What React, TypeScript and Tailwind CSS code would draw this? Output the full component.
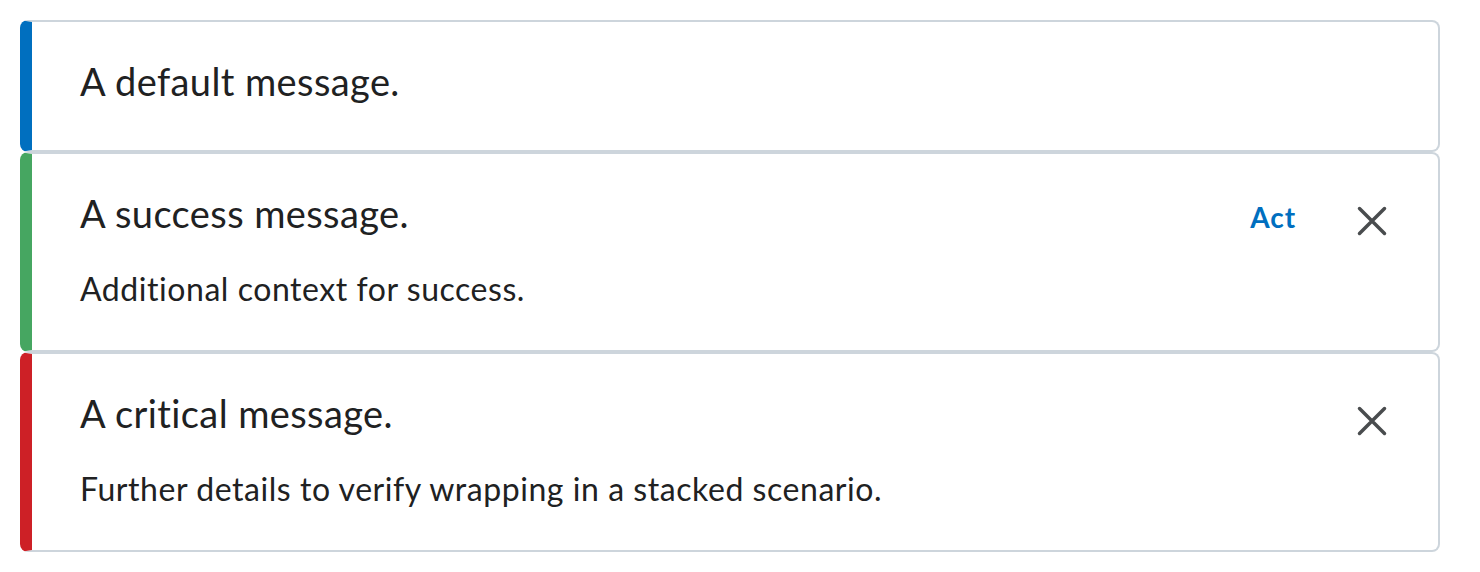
import React from 'react';

type Alert = {
  title: string;
  sub?: string;
  bar: string;
  action?: string;
  close?: boolean;
};

const alerts: Alert[] = [
  { title: 'A default message.', bar: 'border-l-[#006fbf]' },
  {
    title: 'A success message.',
    sub: 'Additional context for success.',
    bar: 'border-l-[#46a661]',
    action: 'Act',
    close: true,
  },
  {
    title: 'A critical message.',
    sub: 'Further details to verify wrapping in a stacked scenario.',
    bar: 'border-l-[#cd2026]',
    close: true,
  },
];

const CloseIcon: React.FC = () => (
  <svg width="30" height="30" viewBox="0 0 30 30" fill="none">
    <path d="M2.5 2.5 L27.5 27.5 M27.5 2.5 L2.5 27.5" stroke="#494c4e" strokeWidth="3.5" strokeLinecap="round" />
  </svg>
);

const AlertBox: React.FC<{ alert: Alert }> = ({ alert }) => (
  <div
    className={`flex items-start rounded-lg border-2 border-[#cdd5dc] border-l-[12px] ${alert.bar} bg-white pl-[48px] pr-[51px] pt-[31px] pb-[41px]`}
  >
    <div className="flex-1 text-[#202122]">
      <div className="text-[38px] leading-[56px] tracking-[0.4px]">{alert.title}</div>
      {alert.sub && (
        <div className="mt-[28px] text-[32px] leading-[40px] tracking-[0.55px]">{alert.sub}</div>
      )}
    </div>
    {alert.action && (
      <button className="mt-[12px] mr-[61px] text-[28px] leading-[40px] font-bold tracking-[0.9px] text-[#006fbf]">
        {alert.action}
      </button>
    )}
    {alert.close && (
      <button className="mt-[21px] flex">
        <CloseIcon />
      </button>
    )}
  </div>
);

export default function App() {
  return (
    <div className="p-5 bg-white font-['Lato',sans-serif]">
      <div className="flex w-[1420px] flex-col">
        {alerts.map((a, i) => (
          <AlertBox key={i} alert={a} />
        ))}
      </div>
    </div>
  );
}
